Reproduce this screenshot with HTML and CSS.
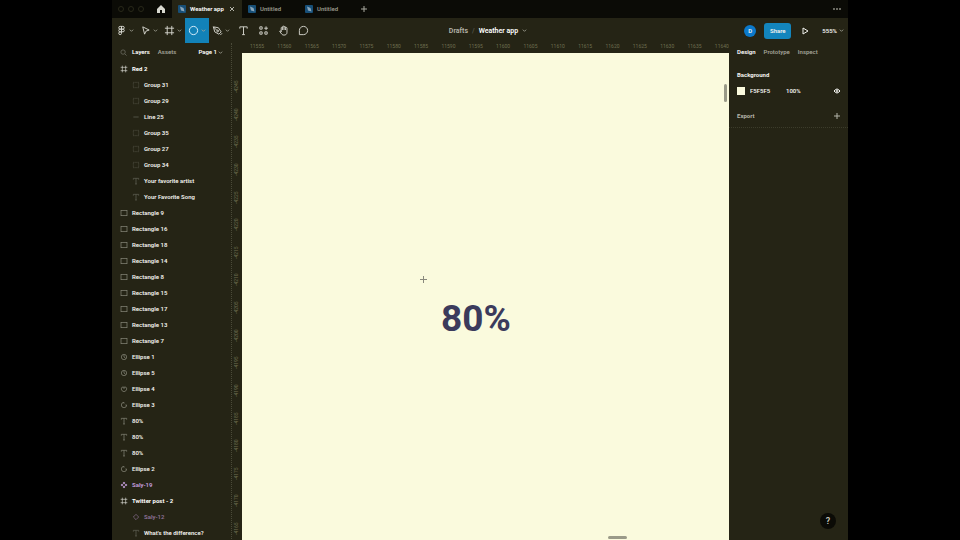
FILE: index.html
```html
<!DOCTYPE html>
<html lang="en">
<head>
  <meta charset="UTF-8">
  <meta name="viewport" content="width=device-width, initial-scale=1.0">
  <title>Weather app</title>
  <link rel="stylesheet" href="styles.css">
</head>
<body>

<svg class="sprite" aria-hidden="true">
  <symbol id="frame" viewBox="0 0 12 12"><path d="M3.5 1v10M8.5 1v10M1 3.5h10M1 8.5h10"/></symbol>
  <symbol id="group" viewBox="0 0 12 12"><rect x="2" y="2" width="8" height="8" stroke-dasharray="1.6 1.6"/></symbol>
  <symbol id="rect" viewBox="0 0 12 12"><rect x="1.5" y="2" width="9" height="8"/></symbol>
  <symbol id="line" viewBox="0 0 12 12"><path d="M2 6h8"/></symbol>
  <symbol id="text" viewBox="0 0 12 12"><path d="M2 4V2h8v2M6 2v8.5M4.7 10.5h2.6"/></symbol>
  <symbol id="ellipse" viewBox="0 0 12 12"><path d="M6 2a4 4 0 1 0 4 4H8M6 2v2"/></symbol>
  <symbol id="pie" viewBox="0 0 12 12"><circle cx="6" cy="6" r="4"/><path d="M6 6V3M6 6l2.500 2"/></symbol>
  <symbol id="arc" viewBox="0 0 12 12"><path d="M3 3.200a4 4 0 1 0 6 0M3 3.200h6M6 3v3"/></symbol>
  <symbol id="component" viewBox="0 0 12 12"><path class="solid" d="M6 1l2 2-2 2-2-2zM6 7l2 2-2 2-2-2zM3 4l2 2-2 2-2-2zM9 4l2 2-2 2-2-2z"/></symbol>
  <symbol id="diamond" viewBox="0 0 12 12"><path d="M6 2l4 4-4 4-4-4z"/></symbol>
  <symbol id="chevron" viewBox="0 0 6 6"><path d="M1 2l2 2 2-2"/></symbol>
  <symbol id="plus" viewBox="0 0 8 8"><path d="M4 1v6M1 4h6"/></symbol>
  <symbol id="file" viewBox="0 0 8 8"><rect class="file-bg" width="8" height="8" rx="1"/><path class="file-pen" d="M2 1.500l3.500 1.500 1 3.500-3.500-1zM2 1.500l2 2.500"/></symbol>
</svg>

<div class="app">
  <header>
    <nav class="tabs" aria-label="Files">
      <span class="window-dots"><i></i><i></i><i></i></span>
      <button class="home" aria-label="Home"><svg viewBox="0 0 8 8"><path d="M0 4l4-4 4 4v4H5V5H3v3H0z"/></svg></button>
      <button class="tab active"><svg><use href="#file"/></svg>Weather app<svg class="close" viewBox="0 0 6 6"><path d="M1 1l4 4M5 1L1 5"/></svg></button>
      <button class="tab"><svg><use href="#file"/></svg>Untitled</button>
      <button class="tab"><svg><use href="#file"/></svg>Untitled</button>
      <button class="new-tab" aria-label="New tab"><svg><use href="#plus"/></svg></button>
      <button class="more" aria-label="More"><i></i><i></i><i></i></button>
    </nav>

    <div class="toolbar">
      <div class="tools">
        <button class="tool" aria-label="Main menu"><svg viewBox="0 0 12 12"><path d="M6 1.500H4.500a1.500 1.500 0 0 0 0 3H6zM6 1.500h1.500a1.500 1.500 0 0 1 0 3H6zM6 4.500H4.500a1.500 1.500 0 0 0 0 3H6zM6 7.500H4.500A1.500 1.500 0 1 0 6 9zM7.500 4.500a1.500 1.500 0 1 1 0 3 1.500 1.500 0 0 1 0-3z"/></svg><svg class="chev"><use href="#chevron"/></svg></button>
        <button class="tool" aria-label="Move"><svg viewBox="0 0 12 12"><path d="M3 2l7 3.500-3.500 1.200L5 10z"/></svg><svg class="chev"><use href="#chevron"/></svg></button>
        <button class="tool" aria-label="Frame"><svg><use href="#frame"/></svg><svg class="chev"><use href="#chevron"/></svg></button>
        <button class="tool selected" aria-label="Ellipse"><svg viewBox="0 0 12 12"><circle cx="6" cy="6" r="4.500"/></svg><svg class="chev"><use href="#chevron"/></svg></button>
        <button class="tool" aria-label="Pen"><svg viewBox="0 0 12 12"><path d="M1.500 2l5.500 1 3 4.500-2.500 2.500L3 7.500zM1.500 2l4 4M9 11l2-2"/><circle cx="6.200" cy="6.500" r="1"/></svg><svg class="chev"><use href="#chevron"/></svg></button>
        <button class="tool single" aria-label="Text"><svg viewBox="0 0 12 12"><path d="M2 4V2h8v2M6 2v8.500M4.500 10.500h3"/></svg></button>
        <button class="tool single" aria-label="Resources"><svg viewBox="0 0 12 12"><path d="M2 2h2.500v2.500H2zM2 7.500h2.500V10H2zM7.500 7.500H10V10H7.500zM8.800 1.500v4M6.800 3.500h4"/></svg></button>
        <button class="tool single" aria-label="Hand"><svg viewBox="0 0 12 12"><path d="M3.500 7.500V3a.8.8 0 0 1 1.500 0V2a.8.8 0 0 1 1.600 0v.5a.8.8 0 0 1 1.600 0v1a.8.8 0 0 1 1.600 0V8c0 2-1.300 3-3.300 3-2 0-2.500-1-4.700-4.300.6-.8 1.200-.3 1.700.8M5 3v2.500M6.600 2.500v3M8.200 3.500v2"/></svg></button>
        <button class="tool single" aria-label="Comment"><svg viewBox="0 0 12 12"><path d="M1.500 10.500V6A4.500 4.500 0 1 1 6 10.500z"/></svg></button>
      </div>
      <div class="file-name"><a href="#">Drafts</a><span class="slash">/</span><button>Weather app<svg class="chev"><use href="#chevron"/></svg></button></div>
      <div class="actions">
        <span class="avatar">D</span>
        <button class="share">Share</button>
        <button class="play" aria-label="Present"><svg viewBox="0 0 8 8"><path d="M2 1l5 3-5 3z"/></svg></button>
        <button class="zoom">555%<svg class="chev"><use href="#chevron"/></svg></button>
      </div>
    </div>
  </header>

  <main>
    <aside class="layers">
      <div class="panel-tabs">
        <button class="search" aria-label="Search"><svg viewBox="0 0 8 8"><circle cx="3.500" cy="3.500" r="2.500"/><path d="M5.500 5.500L7.500 7.500"/></svg></button>
        <button class="on">Layers</button>
        <button>Assets</button>
        <button class="on page">Page 1<svg class="chev"><use href="#chevron"/></svg></button>
      </div>
      <ul class="layer-list">
        <li class="top"><svg><use href="#frame"/></svg>Red 2</li>
        <li class="child"><svg><use href="#group"/></svg>Group 31</li>
        <li class="child"><svg><use href="#group"/></svg>Group 29</li>
        <li class="child"><svg><use href="#line"/></svg>Line 25</li>
        <li class="child"><svg><use href="#group"/></svg>Group 35</li>
        <li class="child"><svg><use href="#group"/></svg>Group 27</li>
        <li class="child"><svg><use href="#group"/></svg>Group 34</li>
        <li class="child"><svg><use href="#text"/></svg>Your favorite artist</li>
        <li class="child"><svg><use href="#text"/></svg>Your Favorite Song</li>
        <li><svg><use href="#rect"/></svg>Rectangle 9</li>
        <li><svg><use href="#rect"/></svg>Rectangle 16</li>
        <li><svg><use href="#rect"/></svg>Rectangle 18</li>
        <li><svg><use href="#rect"/></svg>Rectangle 14</li>
        <li><svg><use href="#rect"/></svg>Rectangle 8</li>
        <li><svg><use href="#rect"/></svg>Rectangle 15</li>
        <li><svg><use href="#rect"/></svg>Rectangle 17</li>
        <li><svg><use href="#rect"/></svg>Rectangle 13</li>
        <li><svg><use href="#rect"/></svg>Rectangle 7</li>
        <li><svg><use href="#pie"/></svg>Ellipse 1</li>
        <li><svg><use href="#pie"/></svg>Ellipse 5</li>
        <li><svg><use href="#arc"/></svg>Ellipse 4</li>
        <li><svg><use href="#ellipse"/></svg>Ellipse 3</li>
        <li><svg><use href="#text"/></svg>80%</li>
        <li><svg><use href="#text"/></svg>80%</li>
        <li><svg><use href="#text"/></svg>80%</li>
        <li><svg><use href="#ellipse"/></svg>Ellipse 2</li>
        <li class="component"><svg><use href="#component"/></svg>Saly-19</li>
        <li class="top"><svg><use href="#frame"/></svg>Twitter post - 2</li>
        <li class="child instance"><svg><use href="#diamond"/></svg>Saly-12</li>
        <li class="child"><svg><use href="#text"/></svg>What's the difference?</li>
      </ul>
    </aside>

    <section class="workspace">
      <div class="ruler-x">
        <span>11555</span><span>11560</span><span>11565</span><span>11570</span><span>11575</span><span>11580</span><span>11585</span><span>11590</span><span>11595</span><span>11600</span><span>11605</span><span>11610</span><span>11615</span><span>11620</span><span>11625</span><span>11630</span><span>11635</span><span>11640</span>
      </div>
      <div class="ruler-y">
        <span>-4245</span><span>-4240</span><span>-4235</span><span>-4230</span><span>-4225</span><span>-4220</span><span>-4215</span><span>-4210</span><span>-4205</span><span>-4200</span><span>-4195</span><span>-4190</span><span>-4185</span><span>-4180</span><span>-4175</span><span>-4170</span><span>-4165</span>
      </div>
      <div class="canvas">
        <p class="percent">80%</p>
        <svg class="cursor" viewBox="0 0 7 7"><path d="M3.500 0v7M0 3.500h7"/></svg>
        <i class="scroll-y"></i>
        <i class="scroll-x"></i>
      </div>
    </section>

    <aside class="design">
      <div class="panel-tabs">
        <button class="on">Design</button>
        <button>Prototype</button>
        <button>Inspect</button>
      </div>
      <section class="background">
        <h2>Background</h2>
        <div class="fill">
          <i class="swatch"></i>
          <input class="hex" aria-label="Background colour" value="F5F5F5">
          <input class="opacity" aria-label="Opacity" value="100%">
          <button aria-label="Toggle visibility"><svg viewBox="0 0 8 8"><path d="M1 4q3-4 6 0-3 4-6 0z"/><circle cx="4" cy="4" r="1"/></svg></button>
        </div>
      </section>
      <section class="export">
        <h2>Export</h2>
        <button aria-label="Add export"><svg><use href="#plus"/></svg></button>
      </section>
      <button class="help" aria-label="Help">?</button>
    </aside>
  </main>
</div>

</body>
</html>
```

FILE: styles.css
```css
* {
  box-sizing: border-box;
}

body {
  margin: 0;
  padding: 0 112px;
  background: #000;
  color: #f2f2ee;
  font-family: Roboto, "Liberation Sans", sans-serif;
  font-size: 6px;
  font-weight: 600;
  line-height: 8px;
}

button,
input {
  margin: 0;
  padding: 0;
  border: none;
  background: none;
  color: inherit;
  font: inherit;
}

button {
  display: flex;
  align-items: center;
}

a {
  color: inherit;
  text-decoration: none;
}

h2,
p,
ul {
  margin: 0;
  padding: 0;
  font-size: inherit;
}

svg {
  width: 8px;
  height: 8px;
  flex: none;
  fill: none;
  stroke: currentColor;
}

.sprite {
  display: none;
}

.solid {
  fill: currentColor;
  stroke: none;
}

.chev {
  width: 5px;
  height: 5px;
  color: #a5a599;
}

.app {
  display: flex;
  flex-direction: column;
  height: 100vh;
  overflow: hidden;
  background: #252415;
}

/* file tabs */
.tabs {
  display: flex;
  height: 18px;
  background: #0b0b06;
}

.window-dots {
  display: flex;
  align-items: center;
  gap: 4px;
  padding-left: 6px;
  width: 42px;
}

.window-dots i {
  width: 6px;
  height: 6px;
  border: 1px solid #282819;
  border-radius: 50%;
}

.home {
  width: 18px;
  padding-left: 3px;
}

.home path {
  fill: #d8d8d0;
  stroke: none;
}

.tab {
  gap: 4px;
  width: 57px;
  padding-left: 6px;
  color: #97978a;
}

.tab.active {
  width: 70px;
  padding-right: 7px;
  background: #252415;
  color: #fff;
}

.file-bg {
  fill: #174f78;
  stroke: none;
}

.active .file-bg {
  fill: #168ee0;
}

.file-pen {
  fill: #fff;
  fill-opacity: 0.5;
  stroke: none;
}

.close {
  width: 6px;
  height: 6px;
  margin-left: auto;
  color: #b5b5aa;
}

.new-tab {
  padding-left: 4px;
  color: #aaaa9f;
}

.more {
  gap: 1px;
  margin-left: auto;
  padding-right: 7px;
}

.more i {
  width: 2px;
  height: 2px;
  border-radius: 50%;
  background: #8a8a7f;
}

/* toolbar */
.toolbar {
  display: grid;
  grid-template-columns: 1fr auto 1fr;
  height: 25px;
}

.tools {
  display: flex;
}

.tool {
  justify-content: center;
  gap: 2px;
  width: 24px;
  color: #dadad2;
}

.tool:first-child {
  width: 25px;
}

.tool svg:first-child {
  width: 11px;
  height: 11px;
}

.tool.single {
  width: 20px;
}

.tool.selected {
  background: #1282b8;
  color: #e2f3ff;
}

.file-name {
  display: flex;
  align-items: center;
  gap: 4px;
  padding-left: 16px;
  font-size: 7px;
  color: #b5b5aa;
}

.file-name button {
  gap: 4px;
  color: #fff;
}

.slash {
  color: #55554a;
}

.actions {
  display: flex;
  align-items: center;
  justify-content: flex-end;
  padding-right: 4px;
}

.avatar {
  width: 12px;
  border-radius: 50%;
  background: #0b79cb;
  line-height: 12px;
  text-align: center;
}

.share {
  justify-content: center;
  width: 27px;
  height: 16px;
  margin: 0 10px 0 8px;
  border-radius: 3px;
  background: #1385bd;
}

.play {
  margin-right: 13px;
}

.zoom {
  gap: 2px;
}

/* panels */
main {
  display: grid;
  grid-template-columns: 120px 1fr 119px;
  flex: 1;
  min-height: 0;
}

.layers {
  border-right: 1px dotted #4a4a38;
}

.panel-tabs {
  display: flex;
  align-items: center;
  height: 18px;
  color: #a2a296;
}

.panel-tabs .on {
  color: #fff;
}

.layers .panel-tabs {
  gap: 8px;
  padding: 0 8px;
}

.search {
  margin-right: -3px;
  color: #66665a;
}

.search svg {
  width: 7px;
  height: 7px;
}

.page {
  gap: 1px;
  margin-left: auto;
}

.layer-list {
  list-style: none;
}

.layer-list li {
  display: flex;
  align-items: center;
  gap: 4px;
  height: 16px;
  padding-left: 8px;
  white-space: nowrap;
}

.layer-list svg {
  color: #8c8c7e;
}

.layer-list .child {
  padding-left: 20px;
}

.layer-list .child svg {
  color: #66665a;
}

.layer-list .top {
  color: #fff;
  font-weight: 700;
}

.layer-list .top svg {
  color: #d8d8d0;
}

.layer-list .component,
.layer-list .component svg {
  color: #c9a0e0;
}

.layer-list .instance,
.layer-list .instance svg {
  color: #8f7399;
}

/* canvas with rulers */
.workspace {
  display: grid;
  grid-template: 10px 1fr / 10px 1fr;
  min-width: 0;
  overflow: hidden;
  color: #6e6e50;
  font-size: 5px;
  font-weight: 400;
}

.ruler-x {
  display: flex;
  grid-column: 2;
  justify-content: space-between;
  padding-left: 8px;
  line-height: 6px;
}

.ruler-x span {
  width: 14px;
  text-align: center;
}

.ruler-y {
  display: flex;
  flex-direction: column;
  justify-content: space-between;
  align-items: center;
  padding: 26px 2px 4px 0;
}

.ruler-y span {
  height: 16px;
  line-height: 6px;
  text-align: center;
  writing-mode: vertical-rl;
  rotate: 180deg;
}

.canvas {
  position: relative;
  background: #fafadd;
}

.percent {
  position: absolute;
  top: 245px;
  left: 199px;
  color: #3b3b5c;
  font-size: 37px;
  font-weight: 700;
  line-height: 42px;
}

.cursor {
  position: absolute;
  top: 223px;
  left: 178px;
  width: 7px;
  height: 7px;
  color: #88887c;
}

.scroll-y,
.scroll-x {
  position: absolute;
  border-radius: 2px;
  background: #9a9a88;
}

.scroll-y {
  top: 31px;
  right: 2px;
  width: 3px;
  height: 18px;
}

.scroll-x {
  right: 102px;
  bottom: 2px;
  width: 19px;
  height: 3px;
}

/* design panel */
.design {
  position: relative;
}

.design .panel-tabs {
  gap: 8px;
  padding-left: 8px;
}

.background {
  padding: 10px 7px 9px 8px;
}

.fill {
  display: flex;
  align-items: center;
  margin-top: 8px;
}

.swatch {
  width: 8px;
  height: 8px;
  margin-right: 5px;
  background: #fafadd;
}

.hex {
  width: 36px;
}

.opacity {
  width: 24px;
}

.fill button {
  margin-left: auto;
}

.export {
  display: flex;
  justify-content: space-between;
  align-items: center;
  height: 24px;
  padding: 0 7px 0 8px;
  border-bottom: 1px dotted #3c3c2b;
  color: #b5b5aa;
}

.help {
  position: absolute;
  right: 12px;
  bottom: 12px;
  justify-content: center;
  width: 16px;
  height: 16px;
  border-radius: 50%;
  background: #0b0b06;
  color: #c8c8bd;
  font-size: 9px;
}
```
